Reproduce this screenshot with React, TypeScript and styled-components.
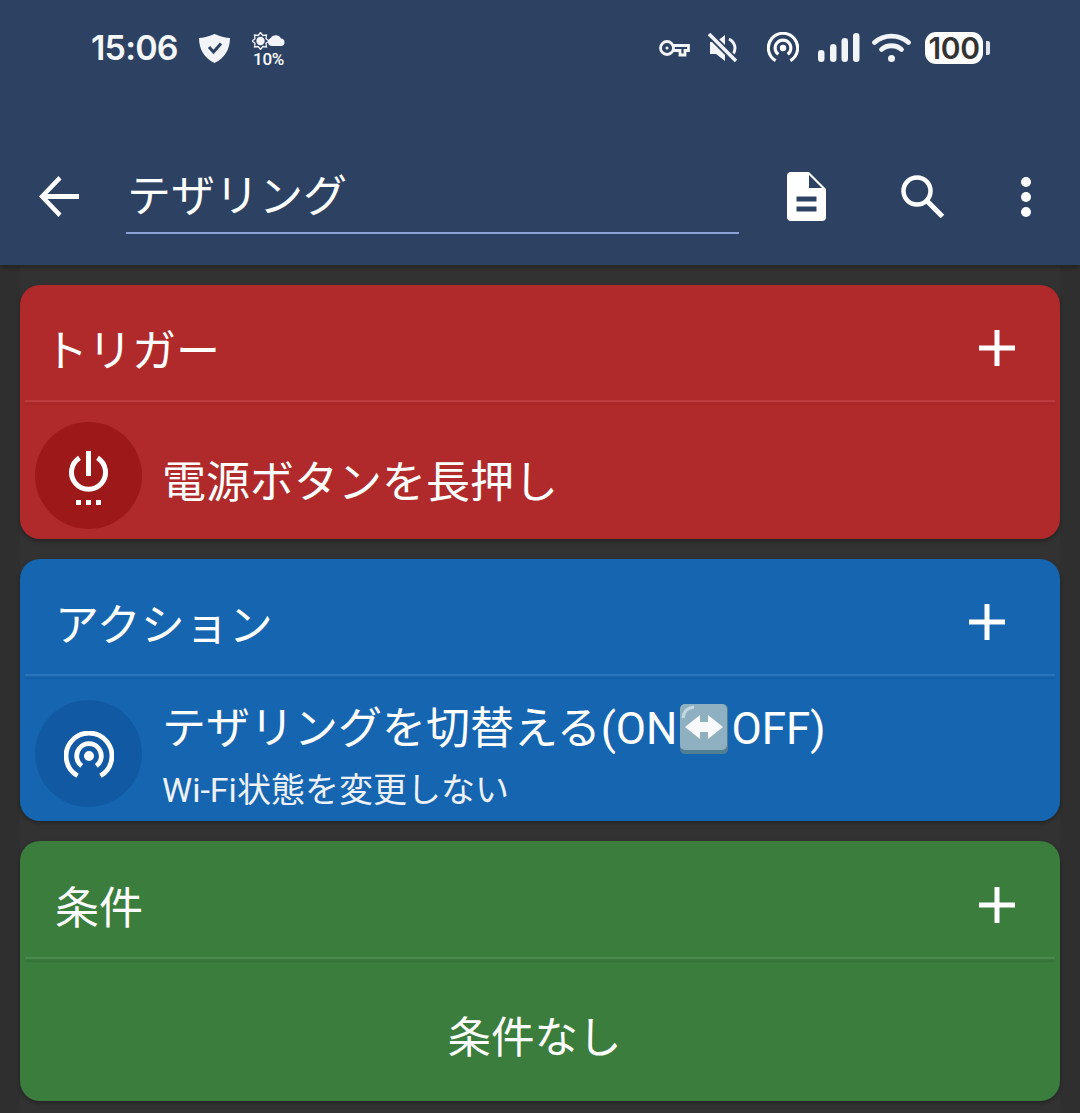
import React from "react";
import styled, { createGlobalStyle } from "styled-components";

const Global = createGlobalStyle`
  html, body { margin: 0; padding: 0; background: #2f2f2f; }
  body { font-family: Roboto, "Noto Sans CJK JP", sans-serif; color: #fff; }
  #root { width: 1080px; height: 1113px; overflow: hidden; }
`;

const Page = styled.div`
  width: 1080px;
  height: 1113px;
  background: #2f2f2f;
  display: flex;
  flex-direction: column;
`;
const Header = styled.header`
  height: 265px;
  background: #2d4263;
  box-shadow: 0 2px 5px rgba(0, 0, 0, 0.3);
  display: flex;
  flex-direction: column;
  position: relative;
`;
const StatusBar = styled.div`
  height: 96px;
  padding: 0 90px 0 91px;
  display: flex;
  align-items: center;
  justify-content: space-between;
`;
const StatusGroup = styled.div`
  display: flex;
  align-items: center;
`;
const Clock = styled.span`
  font-family: Inter, Roboto, sans-serif;
  font-size: 34px;
  font-weight: 600;
  letter-spacing: -0.8px;
  width: 86px;
  white-space: nowrap;
  color: #f4f6f8;
  position: relative;
  top: -1px;
`;
const Slot = styled.span<{ $gap: number }>`
  display: flex;
  margin-left: ${(p) => p.$gap}px;
`;
const Weather = styled.span`
  margin-left: 22px;
  display: flex;
  flex-direction: column;
  align-items: center;
  width: 33px;
  margin-top: 3px;
`;
const WeatherText = styled.span`
  font-family: Roboto, sans-serif;
  font-size: 17px;
  line-height: 17px;
  font-weight: 500;
  white-space: nowrap;
  letter-spacing: -0.3px;
  margin-top: 1px;
`;
const Battery = styled.span`
  margin-left: 14px;
  display: flex;
  align-items: center;
`;
const BatteryBody = styled.span`
  width: 58px;
  height: 32px;
  background: #fff;
  border-radius: 11px;
  color: #333;
  font-family: Inter, Roboto, sans-serif;
  font-size: 30px;
  font-weight: 600;
  letter-spacing: -0.4px;
  display: flex;
  align-items: center;
  justify-content: center;
`;
const BatteryNub = styled.span`
  width: 4px;
  height: 14px;
  margin-left: 3px;
  background: #dfe3e8;
  border-radius: 0 2px 2px 0;
`;
const Toolbar = styled.div`
  flex: 1;
  padding: 32px 0 0 39px;
  display: flex;
  align-items: center;
`;
const SearchField = styled.div`
  width: 613px;
  height: 73px;
  margin: 2px 0 0 47px;
  padding: 0 0 0 1px;
  box-sizing: border-box;
  border-bottom: 2px solid #8c9fd8;
  font-size: 44px;
  line-height: 72px;
  white-space: nowrap;
`;
const ToolButton = styled.span<{ $gap: number }>`
  display: flex;
  margin-left: ${(p) => p.$gap}px;
`;
const Content = styled.main`
  flex: 1;
  margin: 0 20px;
  padding: 20px 0 0;
  background: #323232;
  display: flex;
  flex-direction: column;
  gap: 20px;
`;
const Card = styled.section<{ $bg: string; $h: number }>`
  height: ${(p) => p.$h}px;
  border-radius: 20px;
  background: ${(p) => p.$bg};
  box-shadow: 0 2px 4px rgba(0, 0, 0, 0.3);
  display: flex;
  flex-direction: column;
`;
const CardHeader = styled.div<{ $h: number; $left: number; $right: number }>`
  height: ${(p) => p.$h}px;
  box-sizing: border-box;
  padding: 11px ${(p) => p.$right}px 0 ${(p) => p.$left}px;
  display: flex;
  align-items: center;
  justify-content: space-between;
  flex: none;
`;
const CardTitle = styled.h2`
  margin: 0;
  font-size: 44px;
  font-weight: 400;
  line-height: 60px;
  position: relative;
  top: 4px;
  white-space: nowrap;
`;
const Divider = styled.div<{ $light: string; $dark: string }>`
  flex: none;
  height: 2px;
  margin: 0 5px;
  background: ${(p) => p.$light};
  box-shadow: 0 3px 1px ${(p) => p.$dark};
`;
const CardBody = styled.div<{ $top: number }>`
  flex: 1;
  padding: ${(p) => p.$top}px 0 0 15px;
  display: flex;
  align-items: flex-start;
`;
const IconCircle = styled.div<{ $bg: string }>`
  width: 107px;
  height: 107px;
  border-radius: 50%;
  background: ${(p) => p.$bg};
  flex: none;
  box-sizing: border-box;
  padding-top: 5px;
  display: flex;
  align-items: center;
  justify-content: center;
`;
const TextColumn = styled.div<{ $top: number }>`
  margin: ${(p) => p.$top}px 0 0 20px;
  display: flex;
  flex-direction: column;
`;
const MainText = styled.div`
  font-size: 44px;
  line-height: 60px;
  white-space: nowrap;
  display: flex;
  align-items: center;
`;
const SubText = styled.div`
  font-size: 34px;
  line-height: 44px;
  margin-top: 9px;
  white-space: nowrap;
  color: #eef2f8;
`;
const EmptyBody = styled.div`
  flex: 1;
  display: flex;
  align-items: center;
  justify-content: center;
  padding: 0 11px 0 0;
  font-size: 43.5px;
  position: relative;
  top: 4px;
`;

const Hotspot = ({ s, w }: { s: number; w: number }) => (
  <svg width={s} height={s} viewBox="0 0 48 48" fill="none" stroke="#fff" strokeWidth={w}>
    <path d="M13 43A22 22 0 1 1 35 43" />
    <path d="M17 33.500A11.800 11.800 0 1 1 31 33.500" />
    <circle cx="24" cy="24" r="4.800" fill="#fff" stroke="none" />
  </svg>
);

const Plus = () => (
  <svg width="36" height="36" viewBox="0 0 36 36">
    <path d="M15.500 0h5v15.500H36v5H20.500V36h-5V20.500H0v-5h15.500z" fill="#fff" />
  </svg>
);

const SwapEmoji = () => (
  <svg width="48" height="50" viewBox="0 0 48 50" style={{ margin: "0 3px 0 3px" }}>
    <rect x="0" y="0" width="48" height="50" rx="5" fill="#4f7f90" />
    <rect x="0" y="0" width="47" height="46" rx="5" fill="#8fb0c1" />
    <path d="M3 14Q4 4 14 3" stroke="#c4d8e0" strokeWidth="3" fill="none" />
    <path d="M5 23 20 11v7h8v-7l15 12-15 12v-7h-8v7z" fill="#f7f9fa" />
  </svg>
);

export default function App() {
  return (
    <Page>
      <Global />
      <Header>
        <StatusBar>
          <StatusGroup>
            <Clock>15:06</Clock>
            <Slot $gap={22}>
              <svg width="31" height="29" viewBox="0 0 31 29">
                <path d="M15.500 0C22 2.500 27 4 31 4 31 15 26 24 15.500 29 5 24 0 15 0 4 4 4 9 2.500 15.500 0z" fill="#f2f4f7" />
                <path d="M10 13l4.500 5L22 9.500" fill="none" stroke="#2d4263" strokeWidth="3" />
              </svg>
            </Slot>
            <Weather>
              <svg width="33" height="18" viewBox="0 0 33 18">
                <circle cx="8.500" cy="9" r="4.200" fill="#f2f4f7" />
                <path d="M17 9 14 11.300 14.500 15 10.800 14.500 8.500 17.500 6.200 14.500 2.500 15 3 11.300 0 9 3 6.700 2.500 3 6.200 3.500 8.500 .5 10.800 3.500 14.500 3 14 6.700z" fill="none" stroke="#f2f4f7" strokeWidth="1.300" />
                <path d="M20 14a4 4 0 0 1-1.500-7.700A6 6 0 0 1 29 6.500 3.800 3.800 0 0 1 29.500 14z" fill="#f2f4f7" />
              </svg>
              <WeatherText>10%</WeatherText>
            </Weather>
          </StatusGroup>
          <StatusGroup>
            <Slot $gap={0}>
              <svg width="31" height="18" viewBox="0 0 31 18" fill="none" stroke="#f2f4f7" strokeWidth="2.800">
                <circle cx="8" cy="9" r="6.500" />
                <path d="M14.500 6.500H29.500V11.500H26V16H21V11.500H14.500" />
                <circle cx="8" cy="9" r="1.500" fill="#f2f4f7" stroke="none" />
              </svg>
            </Slot>
            <Slot $gap={18}>
              <svg width="30" height="30" viewBox="0 0 30 30">
                <path d="M2 9h6l9-7v26l-9-7H2z" fill="#f2f4f7" />
                <path d="M21 6a11 11 0 0 1 6 9 11 11 0 0 1-2.500 7" fill="none" stroke="#f2f4f7" strokeWidth="3" />
                <path d="M1 1l27 27" stroke="#2d4263" strokeWidth="7" />
                <path d="M1 1l27 27" stroke="#f2f4f7" strokeWidth="3.500" />
              </svg>
            </Slot>
            <Slot $gap={29}>
              <Hotspot s={32} w={4.6} />
            </Slot>
            <Slot $gap={19}>
              <svg width="42" height="30" viewBox="0 0 42 30" fill="#f2f4f7">
                <rect x="0" y="17" width="6.500" height="12" rx="3.200" />
                <rect x="12" y="11" width="6.500" height="18" rx="3.200" />
                <rect x="23.500" y="5" width="6.500" height="24" rx="3.200" />
                <rect x="35" y="0" width="6.500" height="29" rx="3.200" />
              </svg>
            </Slot>
            <Slot $gap={12}>
              <svg width="39" height="30" viewBox="0 0 39 30" fill="none" stroke="#f2f4f7" strokeWidth="4.800" strokeLinecap="round">
                <path d="M2.500 9.500C12 1 27 1 36.500 9.500" />
                <path d="M9.500 16.500C15 11.500 24 11.500 29.500 16.500" />
                <circle cx="19.500" cy="25.500" r="3.500" fill="#f2f4f7" stroke="none" />
              </svg>
            </Slot>
            <Battery>
              <BatteryBody>100</BatteryBody>
              <BatteryNub />
            </Battery>
          </StatusGroup>
        </StatusBar>
        <Toolbar>
          <svg width="40" height="41" viewBox="0 0 40 41">
            <path d="M40 18H8.500L22.500 3.500 19.500 0 0 20.500 19.500 41l3-3.500L8.500 23H40z" fill="#fff" />
          </svg>
          <SearchField>テザリング</SearchField>
          <ToolButton $gap={48}>
            <svg width="39" height="49" viewBox="0 0 39 49">
              <path d="M4 0h18l17 17v28a4 4 0 0 1-4 4H4a4 4 0 0 1-4-4V4a4 4 0 0 1 4-4z" fill="#fff" />
              <path d="M22 3v13h13z" fill="#2d4263" />
              <rect x="9.500" y="24.500" width="20" height="5" fill="#2d4263" />
              <rect x="9.500" y="34.500" width="20" height="5" fill="#2d4263" />
            </svg>
          </ToolButton>
          <ToolButton $gap={75}>
            <svg width="44" height="43" viewBox="0 0 44 43" fill="none" stroke="#fff">
              <circle cx="16" cy="16" r="13.500" strokeWidth="4.500" />
              <path d="M26 26l15.500 15.500" strokeWidth="5" />
            </svg>
          </ToolButton>
          <ToolButton $gap={76}>
            <svg width="10" height="40" viewBox="0 0 10 40" fill="#fff">
              <circle cx="5" cy="5" r="5" />
              <circle cx="5" cy="20" r="5" />
              <circle cx="5" cy="35" r="5" />
            </svg>
          </ToolButton>
        </Toolbar>
      </Header>
      <Content>
        <Card $bg="#b02a2b" $h={254}>
          <CardHeader $h={115} $left={24} $right={45}>
            <CardTitle>トリガー</CardTitle>
            <Plus />
          </CardHeader>
          <Divider $light="#bb3c3d" $dark="#a82829" />
          <CardBody $top={20}>
            <IconCircle $bg="#9c1819">
              <svg width="39" height="54" viewBox="0 0 39 54" fill="none" stroke="#fff" strokeWidth="5">
                <path d="M10.500 6.800A17 17 0 1 0 28.500 6.800" />
                <path d="M19.500 0v25" />
                <path d="M7 51.500h5M17 51.500h5M27 51.500h5" />
              </svg>
            </IconCircle>
            <TextColumn $top={31}>
              <MainText>電源ボタンを長押し</MainText>
            </TextColumn>
          </CardBody>
        </Card>
        <Card $bg="#1565b0" $h={262}>
          <CardHeader $h={115} $left={35} $right={55}>
            <CardTitle>アクション</CardTitle>
            <Plus />
          </CardHeader>
          <Divider $light="#2a74bb" $dark="#1460a8" />
          <CardBody $top={24}>
            <IconCircle $bg="#1259a3">
              <Hotspot s={50} w={4.600} />
            </IconCircle>
            <TextColumn $top={-1}>
              <MainText>
                テザリングを切替える(ON
                <SwapEmoji />
                OFF)
              </MainText>
              <SubText>Wi-Fi状態を変更しない</SubText>
            </TextColumn>
          </CardBody>
        </Card>
        <Card $bg="#3a7d3c" $h={260}>
          <CardHeader $h={116} $left={35} $right={45}>
            <CardTitle>条件</CardTitle>
            <Plus />
          </CardHeader>
          <Divider $light="#4a8a4c" $dark="#367538" />
          <EmptyBody>条件なし</EmptyBody>
        </Card>
      </Content>
    </Page>
  );
}
